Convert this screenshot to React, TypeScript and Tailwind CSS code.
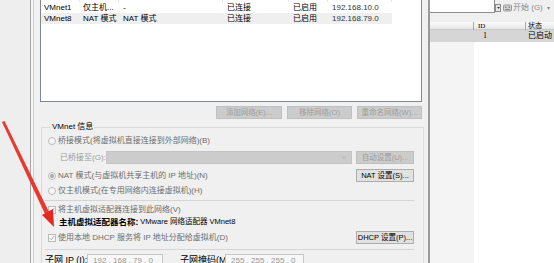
import React from 'react'

const cjk = "font-['Liberation_Sans','Noto_Sans_CJK_SC',sans-serif]"

function Btn({ children, disabled, className }: { children: React.ReactNode; disabled?: boolean; className?: string }) {
  return (
    <div
      className={
        'flex h-[13px] shrink-0 items-center justify-center border text-[7.5px] leading-none whitespace-nowrap ' +
        (disabled ? 'border-[#bfbfbf] bg-[#cccccc] text-[#9d9d9d] ' : 'border-[#adadad] bg-[#e1e1e1] text-black ') +
        (className ?? '')
      }
    >
      {children}
    </div>
  )
}

function Radio({ checked, label }: { checked?: boolean; label: string }) {
  return (
    <div className="flex items-center gap-[2px] text-[#6d6d6d]">
      <span className="flex h-[8px] w-[8px] items-center justify-center rounded-full border border-[#bcbcbc] bg-[#f6f6f6]">
        {checked && <span className="h-[4px] w-[4px] rounded-full bg-[#a9a9a9]" />}
      </span>
      <span className="leading-[12px] whitespace-nowrap">{label}</span>
    </div>
  )
}

function Check({ label }: { label: string }) {
  return (
    <div className="flex h-[12px] items-center gap-[2px] text-[#6d6d6d]">
      <span className="flex h-[8px] w-[8px] items-center justify-center border border-[#bcbcbc] bg-[#f6f6f6]">
        <svg viewBox="0 0 8 8" className="h-[6px] w-[6px]">
          <path d="M1 4.2 L3 6.2 L7 1.5" fill="none" stroke="#a0a0a0" strokeWidth="1.2" />
        </svg>
      </span>
      <span className="leading-[12px] whitespace-nowrap">{label}</span>
    </div>
  )
}

const rows = [
  ['VMnet1', '仅主机...', '-', '已连接', '已启用', '192.168.10.0'],
  ['VMnet8', 'NAT 模式', 'NAT 模式', '已连接', '已启用', '192.168.79.0']
]

function NetList() {
  return (
    <div className="h-[102px] w-[382px] border-x border-b border-[#828790] bg-white">
      <div className="grid h-[2px] grid-cols-[39px_39px_104px_66px_39px_64px]">
        {[0, 1, 2, 3, 4, 5].map((i) => (
          <div key={i} className="border-r border-[#e5e5e5]" />
        ))}
      </div>
      {rows.map((r, i) => (
        <div
          key={r[0]}
          className={
            'grid h-[11px] w-[351px] grid-cols-[39px_39px_104px_66px_39px_64px] leading-[11px] text-black ' +
            (i === 1 ? 'bg-[#efefef]' : '')
          }
        >
          <span className="pl-[3px]">{r[0]}</span>
          <span className="pl-[3px]">{r[1]}</span>
          <span className="pl-[4px]">{r[2]}</span>
          <span className="pl-[4px]">{r[3]}</span>
          <span className="pl-[4px]">{r[4]}</span>
          <span className="pl-[4px] text-[#333]">{r[5]}</span>
        </div>
      ))}
    </div>
  )
}

function IpBox({ value, w }: { value: string; w: string }) {
  return (
    <div className={'flex h-[13px] shrink-0 items-center border border-[#c6c6c6] bg-[#f7f7f7] pl-[5px] whitespace-nowrap text-[#9a9a9a] ' + w}>
      {value}
    </div>
  )
}

function Dialog() {
  return (
    <div className="h-full w-[394px] shrink-0 bg-[#f0f0f0] px-[6px]">
      <NetList />
      <div className="mt-[4px] flex justify-end gap-[5px]">
        <Btn disabled className="w-[66px]">添加网络(E)...</Btn>
        <Btn disabled className="w-[65px]">移除网络(O)</Btn>
        <Btn disabled className="w-[65px]">重命名网络(W)...</Btn>
      </div>
      <fieldset className="mt-[3px] ml-[1px] w-[383px] border border-[#dcdcdc] pt-[3px] pr-[9px] pl-[6px]">
        <legend className="ml-[3px] px-[1px] leading-[10px] text-black">VMnet 信息</legend>
        <Radio label="桥接模式(将虚拟机直接连接到外部网络)(B)" />
        <div className="mt-[4px] flex h-[13px] items-center">
          <span className="w-[58px] shrink-0 pl-[12px] whitespace-nowrap text-[#9a9a9a]">已桥接至(G):</span>
          <div className="flex h-[13px] w-[246px] shrink-0 items-center justify-end border border-[#c4c4c4] bg-[#cccccc] pr-[4px]">
            <svg viewBox="0 0 8 5" className="h-[3px] w-[6px]">
              <path d="M0.5 0.5 L4 4 L7.5 0.5" fill="none" stroke="#a6a6a6" strokeWidth="1" />
            </svg>
          </div>
          <Btn disabled className="ml-[4px] w-[58px]">自动设置(U)...</Btn>
        </div>
        <div className="mt-[5px] flex h-[13px] items-center justify-between">
          <Radio checked label="NAT 模式(与虚拟机共享主机的 IP 地址)(N)" />
          <Btn className="w-[58px]">NAT 设置(S)...</Btn>
        </div>
        <div className="mt-[3px]">
          <Radio label="仅主机模式(在专用网络内连接虚拟机)(H)" />
        </div>
        <div className="mt-[3px] ml-[-3px] h-[1px] bg-[#d5d5d5]" />
        <div className="mt-[3px]">
          <Check label="将主机虚拟适配器连接到此网络(V)" />
        </div>
        <div className="flex h-[12px] items-center pl-[11px] leading-[12px] whitespace-nowrap text-black">
          <span className="text-[8.5px] font-semibold">主机虚拟适配器名称:</span>
          <span className="ml-[2px] text-[7.5px]">VMware 网络适配器 VMnet8</span>
        </div>
        <div className="mt-[3px] flex h-[13px] items-center justify-between">
          <Check label="使用本地 DHCP 服务将 IP 地址分配给虚拟机(D)" />
          <Btn className="w-[58px]">DHCP 设置(P)...</Btn>
        </div>
        <div className="mt-[5px] ml-[-3px] h-[1px] bg-[#d5d5d5]" />
        <div className="mt-[4px] ml-[-3px] flex h-[13px] items-center text-black">
          <span className="w-[42px] shrink-0 whitespace-nowrap text-[9px]">子网 IP (I):</span>
          <IpBox value="192 . 168 . 79 . 0" w="w-[76px]" />
          <span className="ml-[17px] w-[45px] shrink-0 whitespace-nowrap text-[9px]">子网掩码(M):</span>
          <IpBox value="255 . 255 . 255 . 0" w="w-[79px]" />
        </div>
      </fieldset>
    </div>
  )
}

function RightPanel() {
  return (
    <div className="flex h-full w-[124px] shrink-0 flex-col bg-white">
      <div className="h-[22px] bg-[#f0f0f0]">
        <div className="flex h-[13px] items-end">
          <div className="h-[13px] w-[65px] border-r border-b border-[#8d8d8d] bg-white" />
          <div className="mb-[1px] flex h-[8px] w-[6px] items-center justify-center border border-[#8d8d8d] bg-[#e6e6e6]">
            <svg viewBox="0 0 4 3" className="h-[2px] w-[3px]">
              <path d="M0 0 L4 0 L2 3 Z" fill="#333" />
            </svg>
          </div>
          <svg viewBox="0 0 9 8" className="mb-[1px] ml-[2px] h-[8px] w-[9px]">
            <rect x="0.5" y="1" width="8" height="6" rx="1" fill="#d2d2d2" stroke="#9c9c9c" />
            <rect x="2" y="2.5" width="1.5" height="1.5" fill="#8a8a8a" />
            <rect x="5.5" y="2.5" width="1.5" height="1.5" fill="#8a8a8a" />
            <rect x="2" y="5" width="5" height="1" fill="#8a8a8a" />
          </svg>
          <span className="ml-[1px] leading-[10px] text-[#8a8a8a]">开始 (G)</span>
          <span className="mr-[4px] ml-auto text-[6px] leading-[10px] text-[#8a8a8a]">▾</span>
        </div>
      </div>
      <div className="grid h-[8px] grid-cols-[44px_52px_1fr] border-b border-[#c8c8c8] bg-gradient-to-b from-[#fbfbfb] to-[#e6e6e6] text-[7px] leading-[8px] text-black">
        <span className="border-r border-[#a8a8a8]" />
        <span className="border-r border-[#a8a8a8] pl-[4px] font-['Liberation_Serif',serif]">ID</span>
        <span className="pl-[2px]">状态</span>
      </div>
      <div className="grid h-[12px] grid-cols-[44px_52px_1fr] bg-[#d6d6d6] text-[8px] leading-[12px] text-black">
        <span />
        <span className="pl-[9px] font-['Liberation_Serif',serif]">1</span>
        <span className="pl-[2px] whitespace-nowrap">已启动</span>
      </div>
      <div className="flex flex-1">
        <div className="w-[44px] bg-[#f4f4f4]" />
        <div className="flex-1 bg-white" />
      </div>
    </div>
  )
}

export default function App() {
  return (
    <div className={'relative flex h-[263px] w-[554px] overflow-hidden bg-white text-[8px] ' + cjk}>
      <div className="w-[30px] shrink-0 bg-[#eeeeee]" />
      <div className="w-[1px] shrink-0 bg-[#a3a3a3]" />
      <div className="w-[2px] shrink-0 bg-[#f7f7f7]" />
      <div className="w-[1px] shrink-0 bg-[#cfcfcf]" />
      <Dialog />
      <div className="w-[2px] shrink-0 bg-[#9a9a9a]" />
      <RightPanel />
      {/* red annotation arrow */}
      <svg className="pointer-events-none absolute top-0 left-0" width="554" height="263" viewBox="0 0 554 263">
        <polygon points="2,122 4.5,121 49,212 45,214" fill="#e8392e" />
        <polygon points="54,227 42,215 53,209" fill="#e02a22" />
      </svg>
    </div>
  )
}
